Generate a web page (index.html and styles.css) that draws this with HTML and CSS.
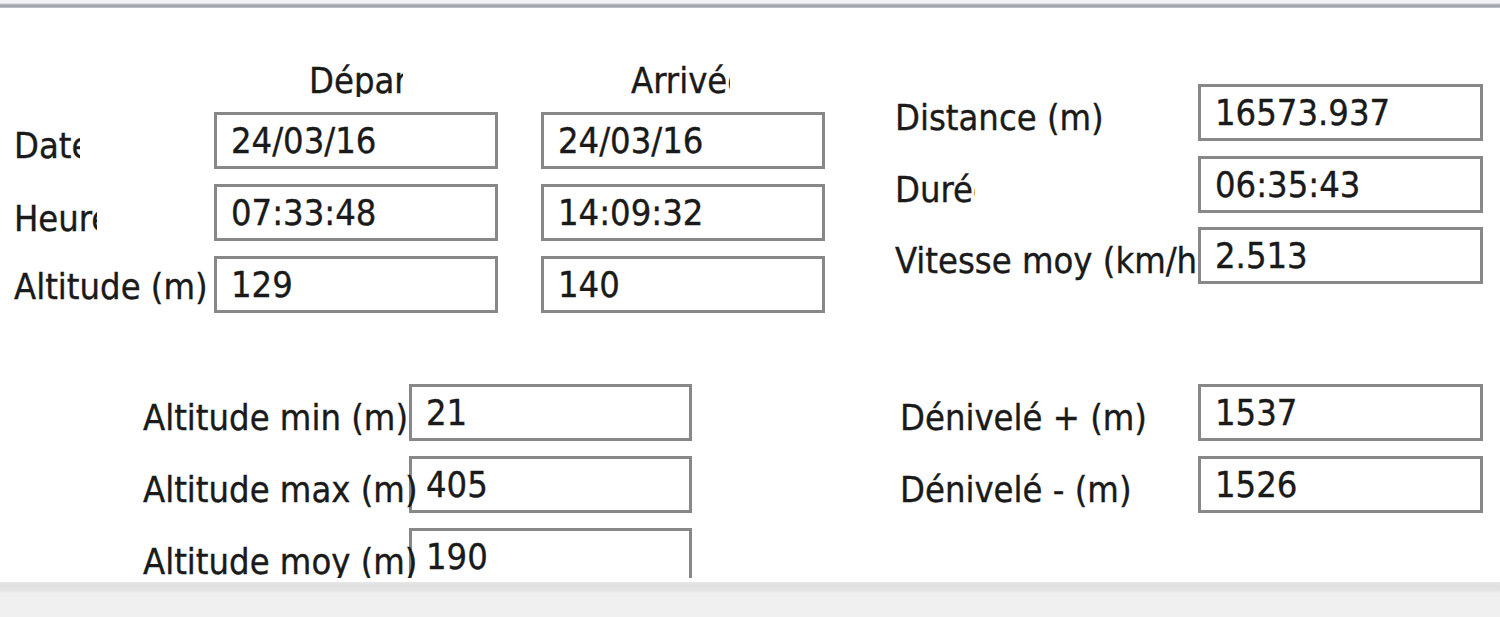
FILE: index.html
```html
<!DOCTYPE html>
<html lang="fr">
<head>
<meta charset="utf-8">
<title>Statistiques</title>
<link rel="stylesheet" href="styles.css">
</head>
<body>
<div class="window">
  <div class="topline"></div>
  <div class="panel">
    <div class="band band-upper">
      <div class="trip-grid">
        <div class="cell-empty"></div>
        <div class="col-head head-dep"><span>Départ</span></div>
        <div class="col-head head-arr"><span>Arrivée</span></div>

        <div class="lbl lbl-date">Date</div>
        <div class="field">24/03/16</div>
        <div class="field">24/03/16</div>

        <div class="lbl lbl-heure">Heure</div>
        <div class="field">07:33:48</div>
        <div class="field">14:09:32</div>

        <div class="lbl lbl-alt">Altitude (m)</div>
        <div class="field">129</div>
        <div class="field">140</div>
      </div>

      <div class="stats-grid">
        <div class="lbl">Distance (m)</div>
        <div class="field">16573.937</div>

        <div class="lbl lbl-duree">Durée</div>
        <div class="field">06:35:43</div>

        <div class="lbl lbl-vitesse">Vitesse moy (km/h)</div>
        <div class="field">2.513</div>
      </div>
    </div>

    <div class="band band-lower">
      <div class="alt-grid">
        <div class="lbl lbl-over">Altitude min (m)</div>
        <div class="field">21</div>

        <div class="lbl lbl-over">Altitude max (m)</div>
        <div class="field">405</div>

        <div class="lbl lbl-over">Altitude moy (m)</div>
        <div class="field">190</div>
      </div>

      <div class="deniv-grid">
        <div class="lbl">Dénivelé + (m)</div>
        <div class="field">1537</div>

        <div class="lbl">Dénivelé - (m)</div>
        <div class="field">1526</div>
      </div>
    </div>
  </div>
  <div class="status"></div>
</div>
</body>
</html>
```

FILE: styles.css
```css
html, body {
  margin: 0;
  padding: 0;
  background: #ffffff;
}

body {
  font-family: "DejaVu Sans Condensed", "DejaVu Sans", sans-serif;
  font-size: 36px;
  color: #1a1a1a;
  -webkit-text-stroke: 0.35px #1a1a1a;
}

.window {
  width: 1500px;
  height: 617px;
  display: flex;
  flex-direction: column;
  overflow: hidden;
}

.topline {
  height: 8px;
  flex: none;
  background: linear-gradient(to bottom,
    #f3f3f5 0px, #f3f3f5 3px,
    #c4c5cc 4px, #a4a6ae 5px, #a4a6ae 7px, #d6d7dc 8px);
}

.panel {
  flex: none;
  height: 570px;
  overflow: hidden;
  background: #ffffff;
  display: flex;
  flex-direction: column;
}

.band {
  display: flex;
  align-items: flex-start;
}

.band-upper {
  height: 305px;
}

.band-lower {
  margin-top: 71px;
}

/* shared pieces */
.lbl {
  line-height: 42px;
  padding-top: 13px;
  white-space: nowrap;
  overflow: hidden;
}

.field {
  box-sizing: border-box;
  height: 57px;
  border: 3px solid #888888;
  background: #ffffff;
  padding: 5px 0 0 14px;
  line-height: 42px;
  white-space: nowrap;
  overflow: hidden;
  position: relative;
}

/* upper-left: départ / arrivée */
.trip-grid {
  margin-left: 14px;
  margin-top: 48px;
  display: grid;
  grid-template-columns: 200px 327px 284px;
  grid-template-rows: 41px 57px 57px 57px;
  row-gap: 15px;
}

.trip-grid .field {
  width: 284px;
}

.col-head {
  line-height: 42px;
  padding-top: 4px;
  white-space: nowrap;
  overflow: hidden;
}

.head-dep {
  margin-left: 95px;
  width: 94px;
}

.head-arr {
  margin-left: 90px;
  width: 99px;
}

.lbl-date {
  width: 66px;
}

.lbl-heure {
  width: 83px;
  padding-top: 14px;
}

.lbl-alt {
  padding-top: 10px;
}

/* upper-right: distance / durée / vitesse */
.stats-grid {
  margin-left: 70px;
  margin-top: 76px;
  display: grid;
  grid-template-columns: 303px 285px;
  grid-auto-rows: 57px;
  row-gap: 14.5px;
}

.lbl-duree {
  width: 80px;
}

.lbl-vitesse {
  width: 303px;
}

/* lower-left: altitudes */
.alt-grid {
  margin-left: 143px;
  display: grid;
  grid-template-columns: 266px 283px;
  grid-auto-rows: 57px;
  row-gap: 15px;
}

.lbl-over {
  overflow: visible;
  position: relative;
  z-index: 1;
}

/* lower-right: dénivelés */
.deniv-grid {
  margin-left: 208px;
  display: grid;
  grid-template-columns: 298px 285px;
  grid-auto-rows: 57px;
  row-gap: 15px;
}

.status {
  flex: 1;
  margin-top: 4px;
  background: linear-gradient(to bottom,
    #e6e6e6 0px, #dfdfdf 5px, #e6e6e6 9px, #efefef 11px, #f0f0f0 100%);
}
```
